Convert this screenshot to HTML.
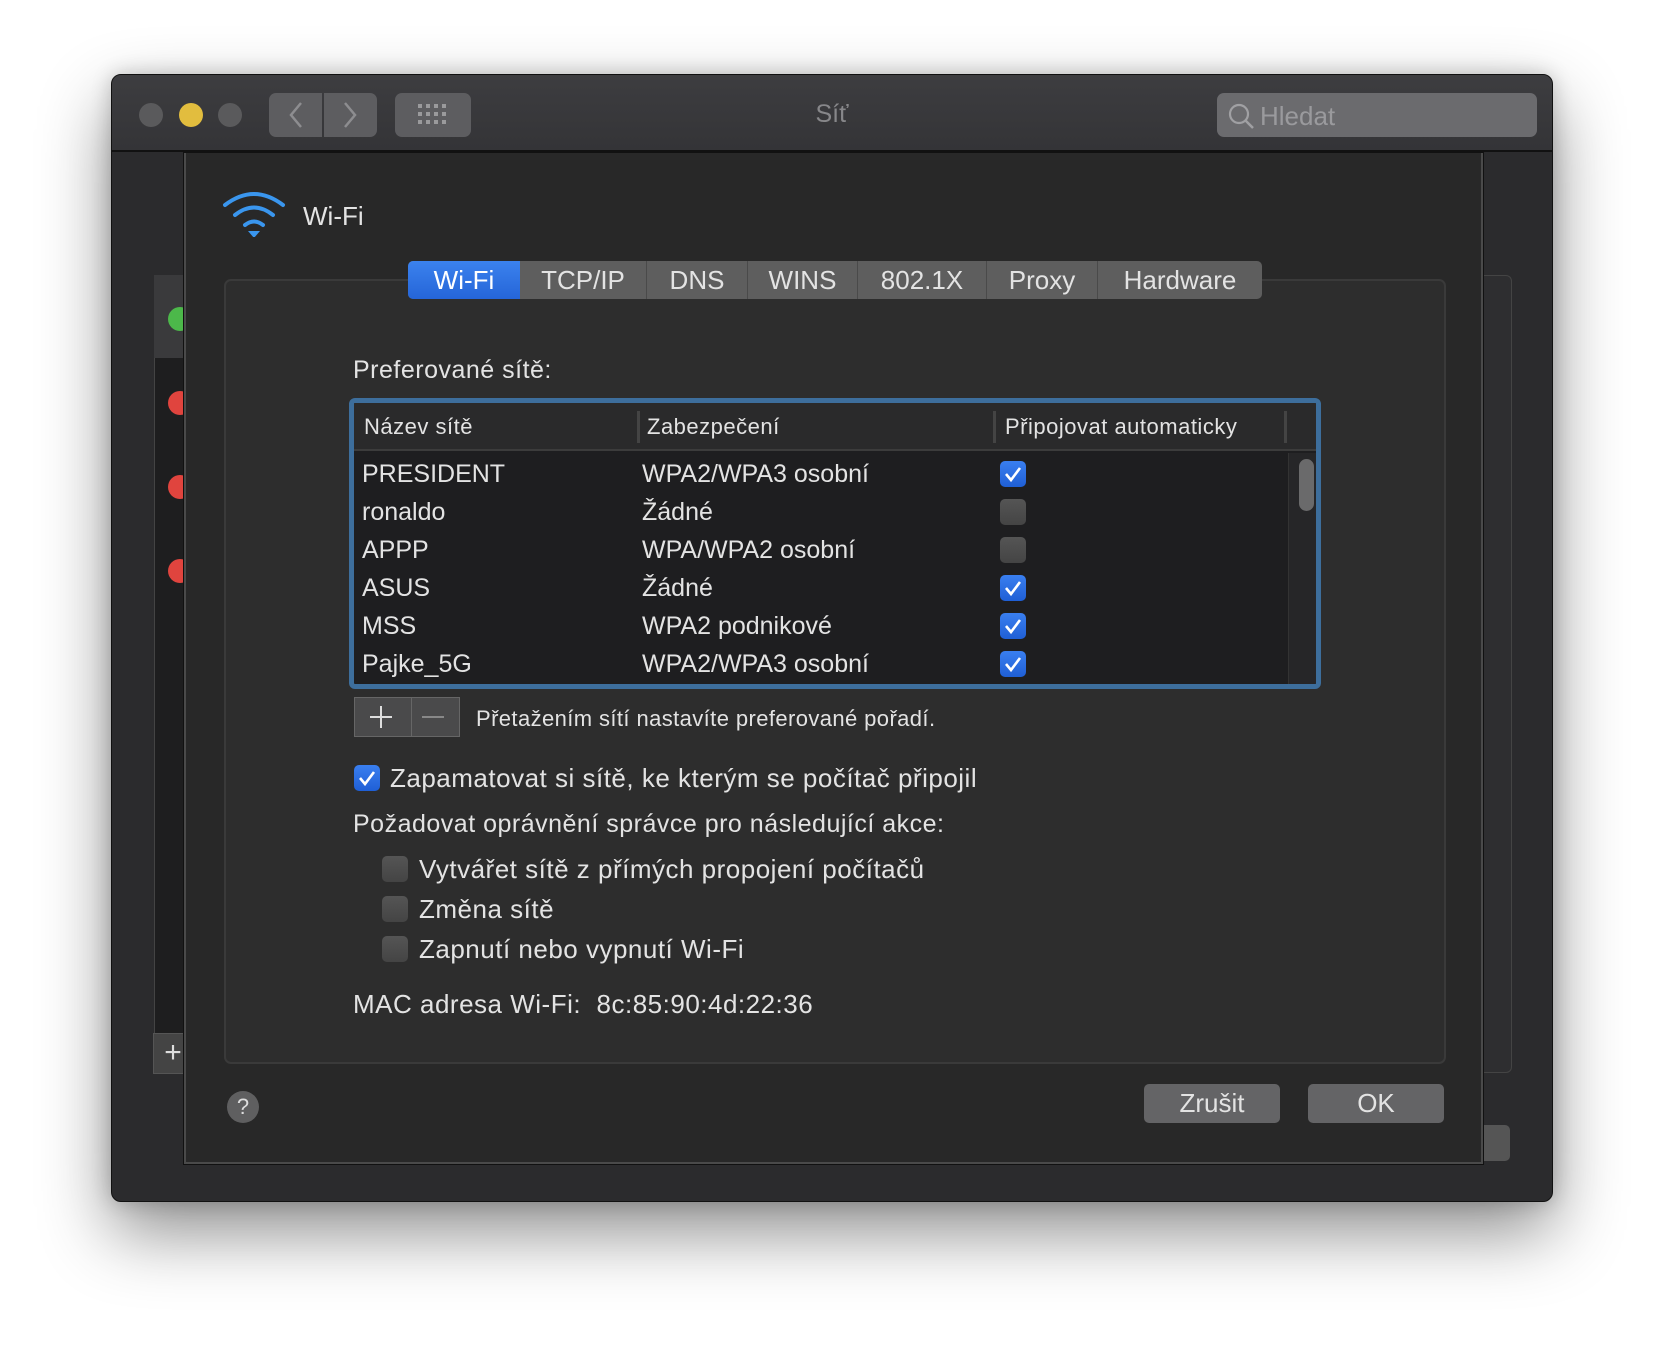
<!DOCTYPE html>
<html><head><meta charset="utf-8"><style>
*{margin:0;padding:0;box-sizing:border-box}
body{width:1664px;height:1350px;background:#fff;position:relative;overflow:hidden;font-family:"Liberation Sans",sans-serif;color:#e3e3e3}
.a{position:absolute}
.win{left:111px;top:74px;width:1442px;height:1128px;background:#2b2b2d;border-radius:10px;border:1px solid #111;box-shadow:0 30px 70px rgba(0,0,0,.45),0 0 20px rgba(0,0,0,.2);overflow:hidden}
.tb{left:0;top:0;width:100%;height:77px;background:linear-gradient(#3d3d40,#343437);border-bottom:2px solid #111}
.dot{width:24px;height:24px;border-radius:50%;background:#5a5a5c;top:28px}
.btn{background:#5d5d60;border-radius:7px}
.sheet{left:72px;top:78px;width:1299px;height:1011px;background:#282828;border:2px solid #4a4a4a;border-top:none;box-shadow:0 0 0 1px #111}
.t{white-space:nowrap}
.ls{letter-spacing:.5px}
.cb{width:26px;height:26px;border-radius:5px;background:linear-gradient(#555,#444)}
.cb.on{background:linear-gradient(#3a7ff0,#1f5fd6)}
.cb.on svg{position:absolute;left:4px;top:4px}
.row{font-size:25px;height:38px;line-height:38px}
</style></head><body>
<div class="a win">
 <div class="a tb">
  <div class="a dot" style="left:27px"></div>
  <div class="a dot" style="left:67px;background:#e2bd3e"></div>
  <div class="a dot" style="left:106px"></div>
  <div class="a btn" style="left:157px;top:18px;width:53px;height:44px;border-radius:7px 0 0 7px"></div>
  <div class="a btn" style="left:212px;top:18px;width:53px;height:44px;border-radius:0 7px 7px 0"></div>
  <svg class="a" style="left:157px;top:18px" width="108" height="44"><path d="M32 10 L22 22 L32 34" stroke="#8d8d90" stroke-width="2.5" fill="none"/><path d="M76 10 L86 22 L76 34" stroke="#8d8d90" stroke-width="2.5" fill="none"/></svg>
  <div class="a btn" style="left:283px;top:18px;width:76px;height:44px"></div>
  <svg class="a" style="left:306px;top:29px" width="30" height="22" fill="#9a9a9c"><rect x="0" y="0" width="4" height="4"/><rect x="8" y="0" width="4" height="4"/><rect x="16" y="0" width="4" height="4"/><rect x="24" y="0" width="4" height="4"/><rect x="0" y="8" width="4" height="4"/><rect x="8" y="8" width="4" height="4"/><rect x="16" y="8" width="4" height="4"/><rect x="24" y="8" width="4" height="4"/><rect x="0" y="16" width="4" height="4"/><rect x="8" y="16" width="4" height="4"/><rect x="16" y="16" width="4" height="4"/><rect x="24" y="16" width="4" height="4"/></svg>
  <div class="a t" style="left:690px;width:60px;text-align:center;top:25px;font-size:25px;color:#87878a">Síť</div>
  <div class="a" style="left:1105px;top:18px;width:320px;height:44px;background:#6b6b6e;border-radius:7px"></div>
  <svg class="a" style="left:1115px;top:27px" width="30" height="30"><circle cx="12" cy="12" r="9" stroke="#a0a0a3" stroke-width="2.2" fill="none"/><path d="M18.5 18.5 L26 26" stroke="#a0a0a3" stroke-width="2.5"/></svg>
  <div class="a t" style="left:1148px;top:26px;font-size:26px;color:#9a9a9d">Hledat</div>
 </div>
 <div class="a" style="left:42px;top:200px;width:40px;height:798px;background:#1e1e1f;border:1px solid #444"></div>
 <div class="a" style="left:42px;top:200px;width:40px;height:83px;background:#3a3a3c"></div>
 <div class="a" style="left:56px;top:232px;width:24px;height:24px;border-radius:50%;background:#4cb84a"></div>
 <div class="a" style="left:56px;top:316px;width:24px;height:24px;border-radius:50%;background:#e0443e"></div>
 <div class="a" style="left:56px;top:400px;width:24px;height:24px;border-radius:50%;background:#e0443e"></div>
 <div class="a" style="left:56px;top:484px;width:24px;height:24px;border-radius:50%;background:#e0443e"></div>
 <div class="a" style="left:41px;top:958px;width:40px;height:41px;background:#444;border:1px solid #555;font-size:30px;line-height:38px;text-align:center;color:#ddd">+</div>
 <div class="a" style="left:1360px;top:200px;width:40px;height:798px;background:#2e2e30;border:1px solid #444;border-radius:6px"></div>
 <div class="a" style="left:1360px;top:1050px;width:38px;height:36px;background:#555;border-radius:5px"></div>

 <div class="a sheet">
  <svg class="a" style="left:35px;top:36px" width="66" height="48"><g fill="none" stroke="#3a96ee" stroke-width="4" stroke-linecap="round"><path d="M4 16 Q33 -6 62 16"/><path d="M14 26 Q33 11 52 26"/><path d="M24 36 Q33 29 42 36"/></g><path d="M27 42 L39 42 L33 49Z" fill="#3a96ee"/></svg>
  <div class="a t" style="left:117px;top:48px;font-size:26px">Wi-Fi</div>
  <div class="a" style="left:38px;top:126px;width:1222px;height:785px;background:#2d2d2d;border:2px solid #3a3a3a;border-radius:7px"></div>
  <div class="a" style="left:222px;top:108px;width:854px;height:38px;background:#5e5e5e;border-radius:5px;overflow:hidden;font-size:26px;line-height:38px">
   <div class="a" style="left:0;width:112px;height:38px;background:linear-gradient(#3b82ee,#2565d8);text-align:center;color:#fff">Wi-Fi</div>
   <div class="a" style="left:112px;width:127px;text-align:center;border-right:1px solid #4a4a4a">TCP/IP</div>
   <div class="a" style="left:239px;width:101px;text-align:center;border-right:1px solid #4a4a4a">DNS</div>
   <div class="a" style="left:340px;width:110px;text-align:center;border-right:1px solid #4a4a4a">WINS</div>
   <div class="a" style="left:450px;width:129px;text-align:center;border-right:1px solid #4a4a4a">802.1X</div>
   <div class="a" style="left:579px;width:111px;text-align:center;border-right:1px solid #4a4a4a">Proxy</div>
   <div class="a" style="left:690px;width:164px;text-align:center">Hardware</div>
  </div>
  <div class="a t ls" style="left:167px;top:203px;font-size:25px">Preferované sítě:</div>
  <div class="a" style="left:163px;top:245px;width:972px;height:291px;border:5px solid #3d6e9c;border-radius:6px;background:#1e1e20;overflow:hidden">
   <div class="a" style="left:0;top:0;width:100%;height:48px;background:#2a2a2b;border-bottom:2px solid #3c3c3c;font-size:22px;line-height:48px">
    <div class="a t ls" style="left:10px">Název sítě</div>
    <div class="a" style="left:283px;top:8px;width:3px;height:32px;background:#444"></div>
    <div class="a t ls" style="left:293px">Zabezpečení</div>
    <div class="a" style="left:639px;top:8px;width:3px;height:32px;background:#444"></div>
    <div class="a t ls" style="left:651px">Připojovat automaticky</div>
    <div class="a" style="left:930px;top:8px;width:3px;height:32px;background:#444"></div>
   </div>
   <div class="a" style="left:934px;top:50px;width:30px;height:240px;background:#262628;border-left:1px solid #333"></div>
   <div class="a" style="left:945px;top:56px;width:15px;height:52px;background:#6a6a6b;border-radius:8px"></div>
   <div class="a" style="left:0;top:52px;width:930px">
    <div class="row a" style="top:0;width:100%"><span class="a t" style="left:8px">PRESIDENT</span><span class="a t" style="left:288px">WPA2/WPA3 osobní</span><div class="a cb on" style="left:646px;top:6px"><svg width="18" height="18"><path d="M2 9 L7 15 L16 3" stroke="#fff" stroke-width="2.6" fill="none"/></svg></div></div>
    <div class="row a" style="top:38px;width:100%"><span class="a t" style="left:8px">ronaldo</span><span class="a t" style="left:288px">Žádné</span><div class="a cb" style="left:646px;top:6px"></div></div>
    <div class="row a" style="top:76px;width:100%"><span class="a t" style="left:8px">APPP</span><span class="a t" style="left:288px">WPA/WPA2 osobní</span><div class="a cb" style="left:646px;top:6px"></div></div>
    <div class="row a" style="top:114px;width:100%"><span class="a t" style="left:8px">ASUS</span><span class="a t" style="left:288px">Žádné</span><div class="a cb on" style="left:646px;top:6px"><svg width="18" height="18"><path d="M2 9 L7 15 L16 3" stroke="#fff" stroke-width="2.6" fill="none"/></svg></div></div>
    <div class="row a" style="top:152px;width:100%"><span class="a t" style="left:8px">MSS</span><span class="a t" style="left:288px">WPA2 podnikové</span><div class="a cb on" style="left:646px;top:6px"><svg width="18" height="18"><path d="M2 9 L7 15 L16 3" stroke="#fff" stroke-width="2.6" fill="none"/></svg></div></div>
    <div class="row a" style="top:190px;width:100%"><span class="a t" style="left:8px">Pajke_5G</span><span class="a t" style="left:288px">WPA2/WPA3 osobní</span><div class="a cb on" style="left:646px;top:6px"><svg width="18" height="18"><path d="M2 9 L7 15 L16 3" stroke="#fff" stroke-width="2.6" fill="none"/></svg></div></div>
   </div>
  </div>
  <div class="a" style="left:168px;top:544px;width:106px;height:40px;background:#4a4a4b;border:1px solid #666"></div>
  <div class="a" style="left:225px;top:545px;width:1px;height:38px;background:#666"></div>
  <svg class="a" style="left:168px;top:544px" width="106" height="40"><path d="M27 9 V31 M16 20 H38" stroke="#ddd" stroke-width="2"/><path d="M68 20 H90" stroke="#888" stroke-width="2"/></svg>
  <div class="a t" style="left:290px;top:553px;font-size:22px;letter-spacing:.4px">Přetažením sítí nastavíte preferované pořadí.</div>
  <div class="a cb on" style="left:168px;top:612px"><svg width="18" height="18"><path d="M2 9 L7 15 L16 3" stroke="#fff" stroke-width="2.6" fill="none"/></svg></div>
  <div class="a t ls" style="left:204px;top:610px;font-size:26px">Zapamatovat si sítě, ke kterým se počítač připojil</div>
  <div class="a t ls" style="left:167px;top:657px;font-size:25px">Požadovat oprávnění správce pro následující akce:</div>
  <div class="a cb" style="left:196px;top:703px"></div>
  <div class="a t ls" style="left:233px;top:701px;font-size:26px">Vytvářet sítě z přímých propojení počítačů</div>
  <div class="a cb" style="left:196px;top:743px"></div>
  <div class="a t ls" style="left:233px;top:741px;font-size:26px">Změna sítě</div>
  <div class="a cb" style="left:196px;top:783px"></div>
  <div class="a t ls" style="left:233px;top:781px;font-size:26px">Zapnutí nebo vypnutí Wi-Fi</div>
  <div class="a t ls" style="left:167px;top:836px;font-size:26px">MAC adresa Wi-Fi:&nbsp; 8c:85:90:4d:22:36</div>
  <div class="a" style="left:41px;top:938px;width:32px;height:32px;border-radius:50%;background:#5f5f60;text-align:center;line-height:32px;font-size:22px;color:#ddd">?</div>
  <div class="a" style="left:958px;top:931px;width:136px;height:39px;background:#646466;border-radius:5px;text-align:center;line-height:39px;font-size:26px">Zrušit</div>
  <div class="a" style="left:1122px;top:931px;width:136px;height:39px;background:#646466;border-radius:5px;text-align:center;line-height:39px;font-size:26px">OK</div>
 </div>
</div>
</body></html>
